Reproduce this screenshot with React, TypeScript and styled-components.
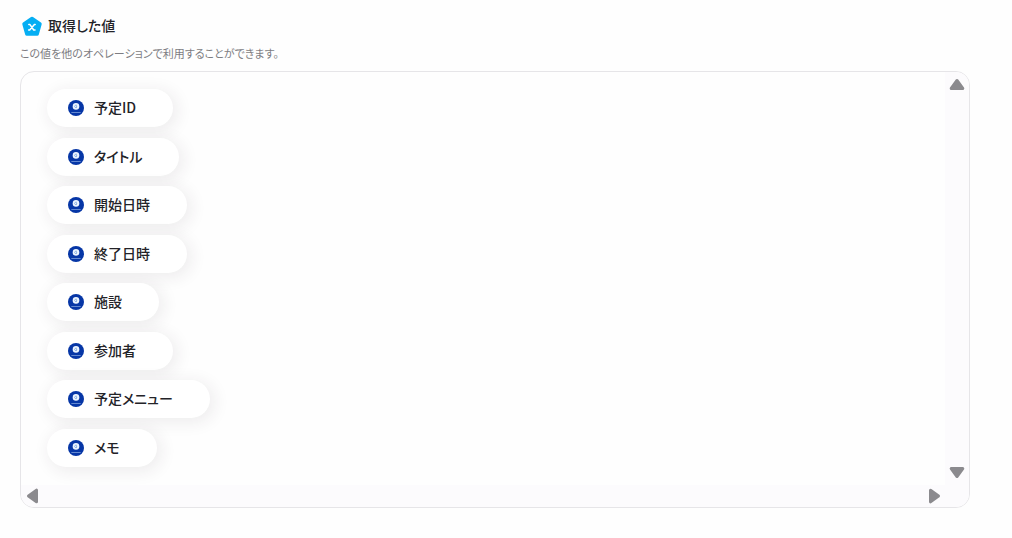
import React from "react";
import styled, { createGlobalStyle } from "styled-components";

const GlobalStyle = createGlobalStyle`
  *, *::before, *::after { box-sizing: border-box; }
  body {
    margin: 0;
    background: #fefefe;
    color: #232328;
    font-family: "Noto Sans CJK JP", sans-serif;
    font-feature-settings: "palt";
  }
`;

const Page = styled.main`
  padding: 16px 42px 30px 20px;
`;

const Header = styled.header`
  display: flex;
  align-items: center;
  gap: 6px;
  height: 20px;
  padding-left: 2px;
`;

const Title = styled.h1`
  margin: 0;
  padding-bottom: 2px;
  font-size: 14px;
  line-height: 20px;
  font-weight: 500;
`;

const Description = styled.p`
  margin: 9px 0 10px;
  color: #7d7d82;
  font-size: 11px;
  line-height: 16px;
`;

const Panel = styled.section`
  display: grid;
  grid-template-columns: minmax(0, 1fr) 24px;
  grid-template-rows: auto 22px;
  overflow: hidden;
  border: 1px solid #e6e5e8;
  border-radius: 14px;
  background: #fefefe;
`;

const ValueList = styled.ul`
  display: flex;
  flex-direction: column;
  align-items: flex-start;
  justify-content: space-between;
  min-height: 378px;
  margin: 17px 26px 18px;
  padding: 0;
  list-style: none;
`;

const Chip = styled.button`
  display: flex;
  align-items: center;
  gap: 10px;
  height: 38px;
  padding: 0 37px 0 21px;
  border: 0;
  border-radius: 19px;
  background: #ffffff;
  box-shadow: 3px 3px 16px 2px rgba(45, 35, 55, 0.08);
  color: inherit;
  font: inherit;
  font-size: 14px;
  line-height: 20px;
  font-weight: 500;
  font-feature-settings: inherit;
  white-space: nowrap;
`;

const ChipLabel = styled.span`
  padding-bottom: 2px;
`;

const ValueItem = styled.li`
  position: relative;
`;

const ScrollTrack = styled.div<{ $horizontal?: boolean }>`
  display: flex;
  flex-direction: ${(p) => (p.$horizontal ? "row" : "column")};
  align-items: center;
  justify-content: space-between;
  padding: ${(p) => (p.$horizontal ? "0 4px 0 5px" : "6px 0 6px")};
  background: #fcfbfd;
`;

const Corner = styled.div`
  background: #fcfbfd;
`;

const ArrowButton = styled.button`
  display: flex;
  padding: 0;
  border: 0;
  background: none;
`;

const values = [
  "予定ID",
  "タイトル",
  "開始日時",
  "終了日時",
  "施設",
  "参加者",
  "予定メニュー",
  "メモ",
];

const angles = { up: 0, right: 90, down: 180, left: 270 };

function Arrow({ direction, label }: { direction: keyof typeof angles; label: string }) {
  const sideways = direction === "left" || direction === "right";
  return (
    <ArrowButton type="button" aria-label={label}>
      <svg
        width={sideways ? 13 : 16}
        height={sideways ? 16 : 13}
        viewBox={sideways ? "-6.5 -8 13 16" : "-8 -6.5 16 13"}
        aria-hidden="true"
      >
        <path
          transform={`rotate(${angles[direction]})`}
          d="M0-4 5.8 4H-5.8Z"
          fill="#8b8a8e"
          stroke="#8b8a8e"
          strokeWidth="3"
          strokeLinejoin="round"
        />
      </svg>
    </ArrowButton>
  );
}

function VariableIcon() {
  return (
    <svg width="20" height="20" viewBox="0 0 20 20" aria-hidden="true">
      <path
        d="M10 2.4 18 8 15.2 18H4.8L2 8Z"
        fill="#05aef3"
        stroke="#05aef3"
        strokeWidth="3.4"
        strokeLinejoin="round"
      />
      <path
        d="M6.8 8.6H8L11.7 14H13M13.2 8.6H12.4L7.7 14H6.6"
        fill="none"
        stroke="#fff"
        strokeWidth="1.5"
        strokeLinecap="round"
        strokeLinejoin="round"
      />
    </svg>
  );
}

function ServiceIcon() {
  return (
    <svg width="16" height="16" viewBox="0 0 16 16" aria-hidden="true">
      <circle cx="8" cy="8" r="8" fill="#0636a6" />
      <circle cx="8" cy="6.4" r="3.3" fill="#edf5ff" />
      <path
        d="M9 5.6A1.3 1.3 0 1 0 9 7.2M8 6.4H9.2"
        fill="none"
        stroke="#7ba5dc"
        strokeWidth=".8"
      />
      <path d="M3.3 12.5H12.7" stroke="#6388d0" strokeWidth="1" />
    </svg>
  );
}

export default function App() {
  return (
    <>
      <GlobalStyle />
      <Page>
        <Header>
          <VariableIcon />
          <Title>取得した値</Title>
        </Header>
        <Description>この値を他のオペレーションで利用することができます。</Description>
        <Panel aria-label="取得した値">
          <ValueList>
            {values.map((value) => (
              <ValueItem key={value}>
                <Chip type="button">
                  <ServiceIcon />
                  <ChipLabel>{value}</ChipLabel>
                </Chip>
              </ValueItem>
            ))}
          </ValueList>
          <ScrollTrack>
            <Arrow direction="up" label="上へスクロール" />
            <Arrow direction="down" label="下へスクロール" />
          </ScrollTrack>
          <ScrollTrack $horizontal>
            <Arrow direction="left" label="左へスクロール" />
            <Arrow direction="right" label="右へスクロール" />
          </ScrollTrack>
          <Corner />
        </Panel>
      </Page>
    </>
  );
}
